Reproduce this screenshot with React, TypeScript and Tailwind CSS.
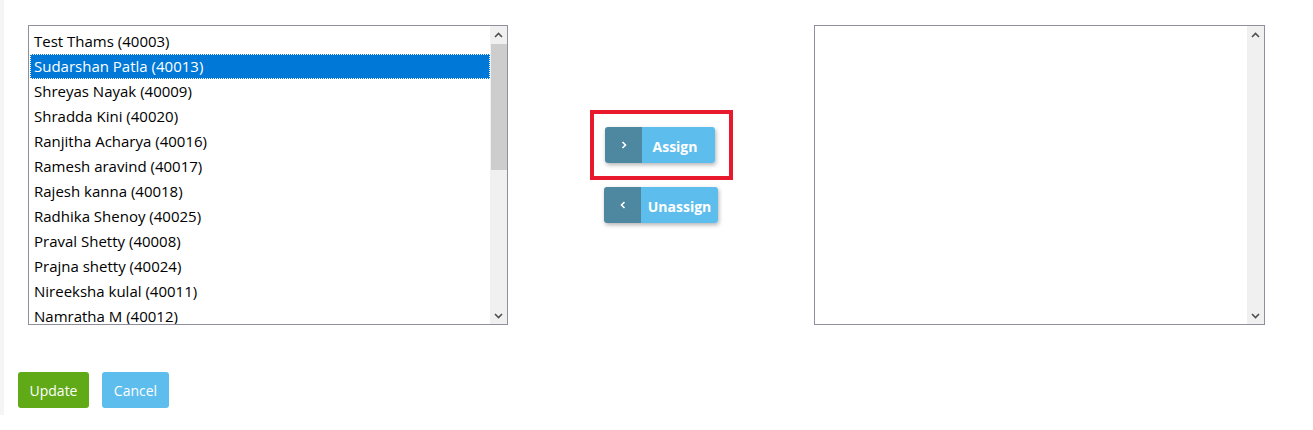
import React from "react";

const items = [
  "Test Thams (40003)",
  "Sudarshan Patla (40013)",
  "Shreyas Nayak (40009)",
  "Shradda Kini (40020)",
  "Ranjitha Acharya (40016)",
  "Ramesh aravind (40017)",
  "Rajesh kanna (40018)",
  "Radhika Shenoy (40025)",
  "Praval Shetty (40008)",
  "Prajna shetty (40024)",
  "Nireeksha kulal (40011)",
  "Namratha M (40012)",
];

function Arrow({ up }: { up?: boolean }) {
  return (
    <div className="h-[17px] w-[17px] flex items-center justify-center bg-[#f0f0f0]">
      <svg width="9" height="6" viewBox="0 0 9 6">
        {up ? (
          <path d="M1 5 L4.5 1.5 L8 5" fill="none" stroke="#505050" strokeWidth="1.6" />
        ) : (
          <path d="M1 1 L4.5 4.5 L8 1" fill="none" stroke="#505050" strokeWidth="1.6" />
        )}
      </svg>
    </div>
  );
}

function Scrollbar({ thumb }: { thumb?: boolean }) {
  return (
    <div className="w-[17px] flex flex-col bg-[#f0f0f0] shrink-0">
      <Arrow up />
      <div className="flex-1 flex flex-col">
        {thumb && <div className="h-[126px] mt-[1px] w-[16px] ml-[1px] bg-[#cdcdcd]" />}
      </div>
      <Arrow />
    </div>
  );
}

function ChevronRight() {
  return (
    <svg width="6" height="8" viewBox="0 0 6 8">
      <path d="M1.5 1 L4.5 4 L1.5 7" fill="none" stroke="#ffffff" strokeWidth="1.6" />
    </svg>
  );
}

function ChevronLeft() {
  return (
    <svg width="6" height="8" viewBox="0 0 6 8">
      <path d="M4.5 1 L1.5 4 L4.5 7" fill="none" stroke="#ffffff" strokeWidth="1.6" />
    </svg>
  );
}

export default function App() {
  return (
    <div
      className="w-[1313px] h-[430px] bg-white flex"
      style={{ fontFamily: '"Open Sans", "Noto Sans", sans-serif' }}
    >
      <div className="w-[4px] h-[415px] bg-[#f5f5f5] shrink-0" />
      <div className="flex flex-col pl-[14px]">
        <div className="flex pt-[25px] pl-[10px]">
          {/* left list */}
          <div className="w-[480px] h-[300px] border border-[#8f8f9d] flex bg-white overflow-hidden">
            <div className="flex-1 pt-[3px] pl-[1px] overflow-hidden">
              {items.map((it, i) => (
                <div
                  key={it}
                  className={
                    "h-[25px] px-[4px] flex items-center text-[15px] whitespace-nowrap " +
                    (i === 1
                      ? "bg-[#0078d7] text-white outline outline-1 outline-dotted outline-[#ffffff] -outline-offset-1"
                      : "text-black")
                  }
                >
                  {it}
                </div>
              ))}
            </div>
            <Scrollbar thumb />
          </div>

          {/* middle buttons */}
          <div className="w-[306px] flex flex-col items-center pt-[85px]">
            <div className="border-4 border-[#e8192c] w-[143px] h-[70px] flex items-center justify-center pl-[2px] pr-[4px]">
              <button className="h-[36px] w-[110px] flex rounded-[3px] overflow-hidden shadow-[1px_2px_4px_rgba(0,0,0,0.3)]">
                <span className="w-[37px] h-full bg-[#4e87a0] flex items-center justify-center">
                  <ChevronRight />
                </span>
                <span className="flex-1 h-full bg-[#5dbdec] flex items-center justify-center text-white font-bold text-[14px] pr-[7px] pt-[2px]">
                  Assign
                </span>
              </button>
            </div>
            <button className="mt-[7px] h-[36px] w-[114px] flex rounded-[3px] overflow-hidden shadow-[1px_2px_4px_rgba(0,0,0,0.3)]">
              <span className="w-[37px] h-full bg-[#4e87a0] flex items-center justify-center">
                <ChevronLeft />
              </span>
              <span className="flex-1 h-full bg-[#5dbdec] flex items-center justify-center text-white font-bold text-[14px] pt-[2px]">
                Unassign
              </span>
            </button>
          </div>

          {/* right list */}
          <div className="w-[451px] h-[300px] border border-[#8f8f9d] flex bg-white">
            <div className="flex-1" />
            <Scrollbar />
          </div>
        </div>

        <div className="flex gap-[13px] mt-[47px]">
          <button className="h-[36px] w-[71px] rounded-[3px] bg-[#60a917] text-white text-[14px]">
            Update
          </button>
          <button className="h-[36px] w-[67px] rounded-[3px] bg-[#5dbdec] text-white text-[14px]">
            Cancel
          </button>
        </div>
      </div>
    </div>
  );
}
